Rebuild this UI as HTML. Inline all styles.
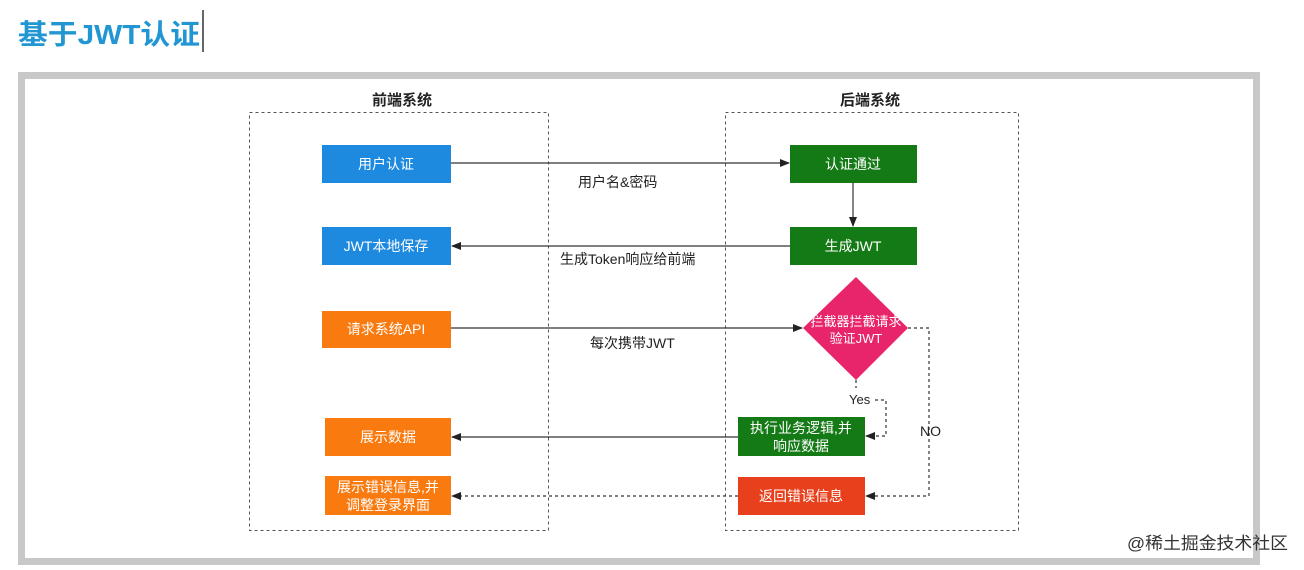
<!DOCTYPE html>
<html><head><meta charset="utf-8"><style>
html,body{margin:0;padding:0;background:#fff;width:1304px;height:570px;overflow:hidden}
svg text{font-family:"Liberation Sans","Noto Sans CJK SC",sans-serif}
</style></head><body>
<svg width="1304" height="570" viewBox="0 0 1304 570" xmlns="http://www.w3.org/2000/svg">
<defs>
<marker id="a" markerWidth="10" markerHeight="10" refX="9" refY="5" orient="auto" markerUnits="userSpaceOnUse"><path d="M0,1 L10,5 L0,9 z" fill="#222"/></marker>
</defs>
<text x="18" y="44" font-size="28" fill="#2196d3" font-weight="bold" textLength="182" lengthAdjust="spacingAndGlyphs">基于JWT认证</text>
<line x1="203" y1="10" x2="203" y2="52" stroke="#333" stroke-width="1.5"/>
<rect x="21.5" y="75.5" width="1235" height="486" fill="#fff" stroke="#c8c8c8" stroke-width="7"/>
<text x="402" y="105" font-size="15" text-anchor="middle" fill="#222" font-weight="bold">前端系统</text>
<text x="870" y="105" font-size="15" text-anchor="middle" fill="#222" font-weight="bold">后端系统</text>
<rect x="249.5" y="112.5" width="299" height="418" fill="none" stroke="#555" stroke-dasharray="3,3"/>
<rect x="725.5" y="112.5" width="293" height="418" fill="none" stroke="#555" stroke-dasharray="3,3"/>
<g font-size="14" fill="#fff" text-anchor="middle">
<rect x="322" y="145" width="129" height="38" fill="#1d8ae0"/><text x="386" y="169">用户认证</text>
<rect x="322" y="227" width="129" height="38" fill="#1d8ae0"/><text x="386" y="251">JWT本地保存</text>
<rect x="322" y="311" width="129" height="37" fill="#f97a0f"/><text x="386" y="334">请求系统API</text>
<rect x="325" y="418" width="126" height="38" fill="#f97a0f"/><text x="388" y="442">展示数据</text>
<rect x="325" y="476" width="126" height="39" fill="#f97a0f"/><text x="388" y="492">展示错误信息,并</text><text x="388" y="510">调整登录界面</text>
<rect x="790" y="145" width="127" height="38" fill="#137a15"/><text x="853" y="169">认证通过</text>
<rect x="790" y="227" width="127" height="38" fill="#137a15"/><text x="853" y="251">生成JWT</text>
<polygon points="856,277 908,328 856,380 803,328" fill="#e8256b"/>
<text x="856" y="326" font-size="13">拦截器拦截请求</text><text x="856" y="343" font-size="13">验证JWT</text>
<rect x="738" y="417" width="127" height="39" fill="#137a15"/><text x="801" y="433">执行业务逻辑,并</text><text x="801" y="451">响应数据</text>
<rect x="738" y="477" width="127" height="38" fill="#e8401c"/><text x="801" y="501">返回错误信息</text>
</g>
<g stroke="#333" stroke-width="1.2" fill="none">
<line x1="451" y1="163" x2="789" y2="163" marker-end="url(#a)"/>
<line x1="853" y1="183" x2="853" y2="226" marker-end="url(#a)"/>
<line x1="790" y1="246" x2="452" y2="246" marker-end="url(#a)"/>
<line x1="451" y1="328" x2="802" y2="328" marker-end="url(#a)"/>
<line x1="738" y1="437" x2="452" y2="437" marker-end="url(#a)"/>
<g stroke-dasharray="3,3">
<path d="M856,380 V388"/>
<path d="M875,400 H886 V436 H866" marker-end="url(#a)"/>
<path d="M908,328 H929 V496 H866" marker-end="url(#a)"/>
<line x1="738" y1="496" x2="452" y2="496" marker-end="url(#a)"/>
</g>
</g>
<g font-size="14" fill="#222">
<text x="578" y="187">用户名&amp;密码</text>
<text x="560" y="264">生成Token响应给前端</text>
<text x="590" y="348">每次携带JWT</text>
<text x="849" y="404" font-size="13">Yes</text>
<text x="920" y="436">NO</text>
</g>
<text x="1127" y="549" font-size="17" fill="#333" textLength="161" lengthAdjust="spacingAndGlyphs">@稀土掘金技术社区</text>
</svg>
</body></html>
